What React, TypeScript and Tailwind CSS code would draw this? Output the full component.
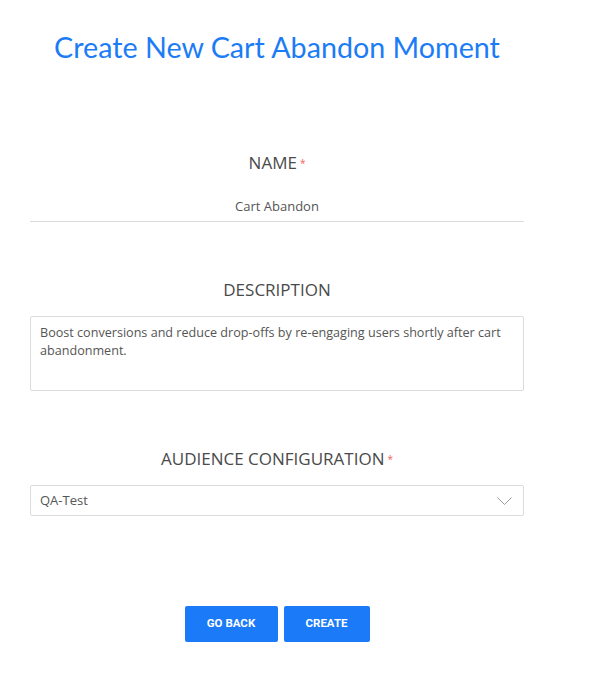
export default function App() {
  return (
    <div className="min-h-[684px] bg-white font-['Open_Sans',sans-serif]">
      <div className="ml-[30px] w-[494px] pt-[27px]">
        <h1 className="text-center font-['Lato',sans-serif] text-[28.7px] leading-[40px] text-[#1b7cf6]">
          Create New Cart Abandon Moment
        </h1>

        <div className="mt-[85px] flex flex-col items-center">
          <label className="text-[17px] leading-[22px] text-[#4a4a4a]">
            NAME<span className="ml-[3px] align-top text-[10px] text-[#f0645a]">*</span>
          </label>
          <div className="mt-[23px] w-full border-b border-[#dcdcdc] pb-[6px] text-center text-[13px] leading-[18px] text-[#555]">
            Cart Abandon
          </div>
        </div>

        <div className="mt-[57px] flex flex-col items-center">
          <label className="text-[17px] leading-[22px] text-[#4a4a4a]">DESCRIPTION</label>
          <div className="mt-[15px] h-[75px] w-full rounded-[2px] border border-[#dcdcdc] px-[9px] py-[7px] text-[12.6px] leading-[18px] text-[#555]">
            Boost conversions and reduce drop-offs by re-engaging users shortly after cart abandonment.
          </div>
        </div>

        <div className="mt-[57px] flex flex-col items-center">
          <label className="text-[17px] leading-[22px] text-[#4a4a4a]">
            AUDIENCE CONFIGURATION<span className="ml-[3px] align-top text-[10px] text-[#f0645a]">*</span>
          </label>
          <div className="mt-[15px] flex h-[31px] w-full items-center justify-between rounded-[2px] border border-[#dcdcdc] pl-[9px] pr-[11px] text-[13px] text-[#555]">
            <span>QA-Test</span>
            <svg width="15" height="8" viewBox="0 0 15 8" fill="none" stroke="#9a9a9a" strokeWidth="1">
              <polyline points="0.5,0.5 7.5,7.5 14.5,0.5" />
            </svg>
          </div>
        </div>

        <div className="mt-[90px] flex justify-center gap-[6px] font-['Roboto',sans-serif]">
          <button className="h-[36px] w-[93px] rounded-[2px] bg-[#1a7af8] text-[11.5px] font-bold text-white">
            GO BACK
          </button>
          <button className="h-[36px] w-[86px] rounded-[2px] bg-[#1a7af8] text-[11.5px] font-bold text-white">
            CREATE
          </button>
        </div>
      </div>
    </div>
  );
}
